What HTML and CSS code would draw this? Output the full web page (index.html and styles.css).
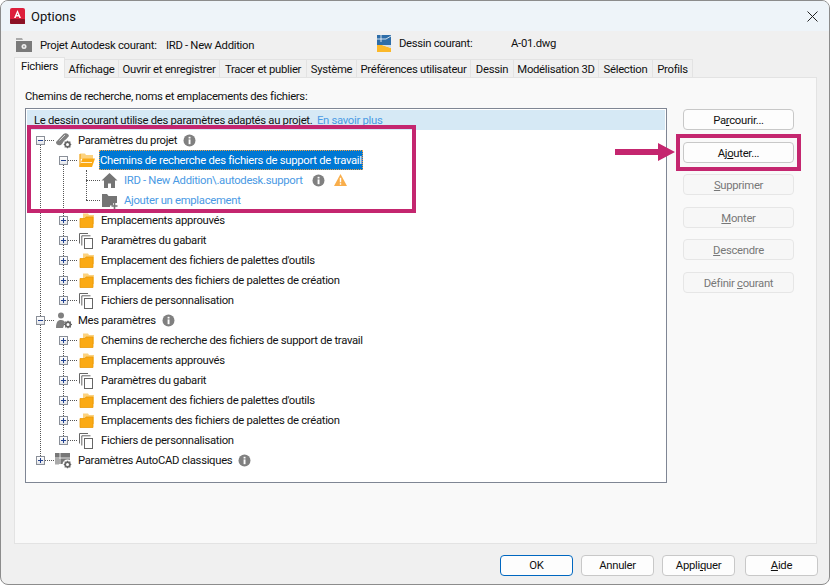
FILE: index.html
```html
<!DOCTYPE html>
<html lang="fr">
<head>
<meta charset="utf-8">
<title>Options</title>
<link rel="stylesheet" href="styles.css">
</head>
<body>
<svg class="defs" width="0" height="0" aria-hidden="true">
  <defs>
    <symbol id="i-info" viewBox="0 0 13 13"><circle cx="6.5" cy="6.5" r="6" fill="#808080"/><rect x="5.6" y="5.4" width="1.9" height="4.8" fill="#fff"/><rect x="5.6" y="2.8" width="1.9" height="1.7" fill="#fff"/></symbol>
    <symbol id="i-folder" viewBox="0 0 17 17"><path d="M5 1.500h5l1 1.500h5v9H5z" fill="#fcd27e"/><path d="M2 6.500h5l1-1.500h7v10.500H2z" fill="#fbaa14" stroke="#e89a0c" stroke-width=".8"/></symbol>
    <symbol id="i-open" viewBox="0 0 17 17"><path d="M2 1.500h5l1 1.500h7v4H2z" fill="#fcd27e"/><path d="M2 2v12" stroke="#f0a010" stroke-width="1.200"/><path d="M4.500 6.500H17l-3 8.500H1z" fill="#fbaa14"/><path d="M3 10.500h11" stroke="#fff" stroke-width=".8"/></symbol>
    <symbol id="i-pages" viewBox="0 0 17 17"><path d="M1.500 11.500V1.500H10M3.800 13.500V3.800H12.500" fill="none" stroke="#666" stroke-width="1"/><rect x="6.500" y="6.500" width="8" height="10" fill="#fff" stroke="#666"/></symbol>
    <symbol id="i-house" viewBox="0 0 17 17"><path d="M8.500 1 .5 8.500H3V16h4v-4.500h3V16h4V8.500h2.500z" fill="#757575"/></symbol>
    <symbol id="i-addfolder" viewBox="0 0 17 17"><path d="M1 2h5l1.500 2H16v7h-4v2.500H9V15H1z" fill="#757575"/><path d="M13.500 11v6M10.500 14h6" stroke="#757575" stroke-width="1.600"/></symbol>
    <symbol id="i-gear" viewBox="0 0 8 8"><circle cx="4" cy="4" r="2.400" fill="none" stroke="#666" stroke-width="1.800"/><path d="M4 0v1.500M4 6.500V8M0 4h1.500M6.500 4H8M1.200 1.200l1 1M5.800 5.800l1 1M1.200 6.800l1-1M5.800 2.200l1-1" stroke="#666" stroke-width="1.200"/></symbol>
    <symbol id="i-proj" viewBox="0 0 17 17"><path d="M1 10 8.500 2c2-1.500 5-.5 5.500 2l-7 8c-2 2.500-6.500 1-6-2z" fill="#808080"/><path d="M4.500 8.500 10 3" stroke="#eee" stroke-width=".8"/><circle cx="12.500" cy="12.500" r="5" fill="#fff"/><use href="#i-gear" x="8.500" y="8.500" width="8" height="8"/></symbol>
    <symbol id="i-user" viewBox="0 0 17 17"><circle cx="6" cy="3.500" r="3" fill="#808080"/><path d="M1 16c0-5.500 1.500-8 5-8 2.500 0 3.500 1 4 2.500L8 16z" fill="#808080"/><use href="#i-gear" x="9" y="8.500" width="8" height="8"/></symbol>
    <symbol id="i-classic" viewBox="0 0 17 17"><rect x="0" y="1" width="15" height="11" fill="#777"/><path d="M5 1v11M0 6h15" stroke="#fff" stroke-width=".8"/><rect x="0" y="7" width="4" height="5.500" fill="#aaa"/><circle cx="12.500" cy="12.500" r="5" fill="#fff"/><use href="#i-gear" x="8.500" y="8.500" width="8" height="8"/></symbol>
  </defs>
</svg>
<div class="window">
  <header class="titlebar">
    <svg class="app-icon" viewBox="0 0 15 16" aria-hidden="true"><path d="M2 0h11a2 2 0 0 1 2 2v14H2a2 2 0 0 1-2-2V2a2 2 0 0 1 2-2z" fill="#dd1f3c"/><rect x="0" y="11" width="15" height="5" rx="1" fill="#8c1226"/><path d="M7.500 2 4 10h1.700l.6-1.500h2.400l.6 1.500H11zM6.900 7l.6-2 .6 2z" fill="#fff"/></svg>
    <span class="title">Options</span>
    <svg class="close" viewBox="0 0 11 11" aria-hidden="true"><path d="M.5.500l10 10M10.500.500l-10 10" stroke="#222" stroke-width="1"/></svg>
  </header>
  <main class="body">
    <section class="info">
      <div class="info-left">
        <svg class="proj-icon" viewBox="0 0 16 14" aria-hidden="true"><path d="M0 0h6l1 2H0z" fill="#aaa"/><rect y="3" width="16" height="11" fill="#7a7a7a"/><circle cx="8" cy="8.500" r="2.500" fill="#eee"/><circle cx="8" cy="8.500" r="1" fill="#999"/></svg>
        <span class="info-label">Projet Autodesk courant:</span>
        <span>IRD - New Addition</span>
      </div>
      <div class="info-right">
        <svg class="dwg-icon" viewBox="0 0 14 17" aria-hidden="true"><rect width="14" height="10" fill="#2e6da8"/><path d="M0 4h9M4 0v7M9 4l5-3" stroke="#fff" stroke-width=".8"/><path d="M0 10h5l9 3v4H0z" fill="#fbb829"/><path d="M5 10h9v3z" fill="#cfdde9"/></svg>
        <span class="dwg-label">Dessin courant:</span>
        <span>A-01.dwg</span>
      </div>
    </section>
    <nav class="tabs">
      <div class="tab active">Fichiers</div>
      <div class="tab">Affichage</div>
      <div class="tab">Ouvrir et enregistrer</div>
      <div class="tab">Tracer et publier</div>
      <div class="tab">Système</div>
      <div class="tab">Préférences utilisateur</div>
      <div class="tab">Dessin</div>
      <div class="tab">Modélisation 3D</div>
      <div class="tab">Sélection</div>
      <div class="tab">Profils</div>
    </nav>
    <section class="panel">
      <div class="panel-main">
        <div class="panel-label">Chemins de recherche, noms et emplacements des fichiers:</div>
        <div class="tree-box">
          <div class="banner">Le dessin courant utilise des paramètres adaptés au projet. <a class="link learn">En savoir plus</a></div>
          <ul class="tree root">
            <li>
              <div class="row"><span class="toggle minus"></span><span class="dash"></span><svg class="icon"><use href="#i-proj"/></svg><span class="label">Paramètres du projet</span><svg class="info-dot"><use href="#i-info"/></svg></div>
              <ul class="tree sub">
                <li>
                  <div class="row"><span class="toggle minus"></span><span class="dash"></span><svg class="icon"><use href="#i-open"/></svg><span class="label selected">Chemins de recherche des fichiers de support de travail</span></div>
                  <ul class="tree leafs">
                    <li><div class="row"><span class="dash long"></span><svg class="icon"><use href="#i-house"/></svg><span class="label link">IRD - New Addition\.autodesk.support</span><svg class="info-dot"><use href="#i-info"/></svg><svg class="warn" viewBox="0 0 13 12" aria-hidden="true"><path d="M6.500 0 13 12H0z" fill="#f9ae4b"/><rect x="5.800" y="3.800" width="1.400" height="4.500" fill="#fff"/><rect x="5.800" y="9.200" width="1.400" height="1.500" fill="#fff"/></svg></div></li>
                    <li><div class="row"><span class="dash long"></span><svg class="icon"><use href="#i-addfolder"/></svg><span class="label link">Ajouter un emplacement</span></div></li>
                  </ul>
                </li>
                <li><div class="row"><span class="toggle plus"></span><span class="dash"></span><svg class="icon"><use href="#i-folder"/></svg><span class="label">Emplacements approuvés</span></div></li>
                <li><div class="row"><span class="toggle plus"></span><span class="dash"></span><svg class="icon"><use href="#i-pages"/></svg><span class="label">Paramètres du gabarit</span></div></li>
                <li><div class="row"><span class="toggle plus"></span><span class="dash"></span><svg class="icon"><use href="#i-folder"/></svg><span class="label">Emplacement des fichiers de palettes d'outils</span></div></li>
                <li><div class="row"><span class="toggle plus"></span><span class="dash"></span><svg class="icon"><use href="#i-folder"/></svg><span class="label">Emplacements des fichiers de palettes de création</span></div></li>
                <li><div class="row"><span class="toggle plus"></span><span class="dash"></span><svg class="icon"><use href="#i-pages"/></svg><span class="label">Fichiers de personnalisation</span></div></li>
              </ul>
            </li>
            <li>
              <div class="row"><span class="toggle minus"></span><span class="dash"></span><svg class="icon"><use href="#i-user"/></svg><span class="label">Mes paramètres</span><svg class="info-dot"><use href="#i-info"/></svg></div>
              <ul class="tree sub">
                <li><div class="row"><span class="toggle plus"></span><span class="dash"></span><svg class="icon"><use href="#i-folder"/></svg><span class="label">Chemins de recherche des fichiers de support de travail</span></div></li>
                <li><div class="row"><span class="toggle plus"></span><span class="dash"></span><svg class="icon"><use href="#i-folder"/></svg><span class="label">Emplacements approuvés</span></div></li>
                <li><div class="row"><span class="toggle plus"></span><span class="dash"></span><svg class="icon"><use href="#i-pages"/></svg><span class="label">Paramètres du gabarit</span></div></li>
                <li><div class="row"><span class="toggle plus"></span><span class="dash"></span><svg class="icon"><use href="#i-folder"/></svg><span class="label">Emplacement des fichiers de palettes d'outils</span></div></li>
                <li><div class="row"><span class="toggle plus"></span><span class="dash"></span><svg class="icon"><use href="#i-folder"/></svg><span class="label">Emplacements des fichiers de palettes de création</span></div></li>
                <li><div class="row"><span class="toggle plus"></span><span class="dash"></span><svg class="icon"><use href="#i-pages"/></svg><span class="label">Fichiers de personnalisation</span></div></li>
              </ul>
            </li>
            <li>
              <div class="row"><span class="toggle plus"></span><span class="dash"></span><svg class="icon"><use href="#i-classic"/></svg><span class="label">Paramètres AutoCAD classiques</span><svg class="info-dot"><use href="#i-info"/></svg></div>
            </li>
          </ul>
        </div>
      </div>
      <div class="side-buttons">
        <button class="btn">Pa<u>r</u>courir...</button>
        <button class="btn">Aj<u>o</u>uter...</button>
        <button class="btn" disabled><u>S</u>upprimer</button>
        <button class="btn" disabled><u>M</u>onter</button>
        <button class="btn" disabled><u>D</u>escendre</button>
        <button class="btn" disabled>Définir <u>c</u>ourant</button>
      </div>
    </section>
    <footer class="footer">
      <button class="btn wide primary">OK</button>
      <button class="btn wide">Annuler</button>
      <button class="btn wide">Appli<u>q</u>uer</button>
      <button class="btn wide last"><u>A</u>ide</button>
    </footer>
  </main>
  <div class="mark mark-tree"></div>
  <div class="mark mark-btn"></div>
  <svg class="mark-arrow" viewBox="0 0 60 18" aria-hidden="true"><path d="M0 6h43V0l17 9-17 9v-6H0z" fill="#c4266f"/></svg>
</div>
</body>
</html>
```
FILE: styles.css
```css
* { box-sizing: border-box; }
html, body { margin: 0; padding: 0; }
body {
  width: 830px;
  height: 585px;
  background: #fff;
  font-family: Roboto, "Liberation Sans", sans-serif;
  font-size: 11.3px;
  letter-spacing: -0.3px;
  color: #111;
  overflow: hidden;
}
.defs { position: absolute; }
.window {
  position: relative;
  width: 830px;
  height: 585px;
  display: flex;
  flex-direction: column;
  background: #f0f0f0;
  border: 1px solid #8c8c8c;
  border-radius: 8px;
  overflow: hidden;
}
.titlebar {
  flex: none;
  height: 30px;
  display: flex;
  align-items: center;
  padding: 0 11px 0 9px;
  background: #eef4f9;
}
.app-icon { width: 15px; height: 16px; }
.title { margin-left: 6px; font-size: 13px; letter-spacing: 0; }
.close { margin-left: auto; width: 11px; height: 11px; }
.body { flex: 1; display: flex; flex-direction: column; padding: 0 12px 0 13px; min-height: 0; }
.info {
  flex: none;
  height: 26px;
  display: grid;
  grid-template-columns: 363px 1fr;
}
.info-left { display: flex; align-items: center; padding: 2px 0 0 2px; height: 26px; white-space: nowrap; }
.info-right { display: flex; align-items: center; height: 24px; white-space: nowrap; }
.proj-icon { width: 16px; height: 14px; margin-right: 8px; }
.info-label { width: 126px; }
.dwg-icon { width: 14px; height: 17px; margin-right: 8px; }
.dwg-label { width: 112px; }
.tabs {
  flex: none;
  height: 20px;
  display: grid;
  grid-template-columns: 51px 54px 101px 87px 50px 114px 43px 85px 54px 40px;
  justify-content: start;
  position: relative;
  z-index: 1;
}
.tab {
  margin-top: 2px;
  height: 18px;
  padding-top: 2px;
  display: flex;
  align-items: center;
  justify-content: center;
  white-space: nowrap;
  background: #f0f0f0;
  border: 1px solid #e3e3e3;
  border-bottom: 0;
  border-left: 0;
}
.tab.active {
  margin-top: 0;
  height: 21px;
  padding-top: 0;
  padding-bottom: 3px;
  background: #f9f9f9;
  border-left: 1px solid #e3e3e3;
}
.panel {
  flex: none;
  width: 803px;
  height: 467px;
  display: flex;
  background: #f9f9f9;
  border: 1px solid #e3e3e3;
  padding-left: 10px;
}
.panel-main { width: 642px; flex: none; }
.panel-label { height: 16px; line-height: 18px; margin: 10px 0 4px; }
.tree-box {
  height: 375px;
  background: #fff;
  border: 1px solid #7f8694;
  padding: 1px;
}
.banner {
  height: 20px;
  line-height: 22px;
  padding-left: 7px;
  background: #d6e9f5;
  white-space: nowrap;
}
.link { color: #4a9ae4; }
.learn { margin-left: 2px; }
.tree { list-style: none; margin: 0; padding: 0; position: relative; }
.tree::before {
  content: "";
  position: absolute;
  left: 4px;
  top: 10px;
  bottom: 10px;
  border-left: 1px dotted #555;
}
.root { margin-left: 9px; }
.sub { margin-left: 23px; }
.leafs { margin-left: 27px; }
.leafs::before { left: 0; top: 0; }
.row {
  height: 20px;
  display: flex;
  align-items: center;
  position: relative;
  white-space: nowrap;
}
.toggle {
  flex: none;
  width: 9px;
  height: 9px;
  border: 1px solid #8a8f98;
  background: linear-gradient(#fff, #e4e6ea);
  position: relative;
  z-index: 1;
}
.toggle::before {
  content: "";
  position: absolute;
  left: 1px;
  top: 3px;
  width: 5px;
  height: 1px;
  background: #1f3f8f;
}
.toggle.plus::after {
  content: "";
  position: absolute;
  left: 3px;
  top: 1px;
  width: 1px;
  height: 5px;
  background: #1f3f8f;
}
.dash { flex: none; width: 9px; border-top: 1px dotted #555; }
.dash.long { width: 14px; }
.icon { flex: none; width: 17px; height: 17px; margin: 0 4px 0 1px; }
.label { padding: 0 2px; height: 20px; line-height: 22px; }
.selected {
  padding: 0 1px;
  background: #0078d4;
  color: #fff;
  outline: 1px dotted #f0a040;
  outline-offset: -1px;
}
.info-dot { flex: none; width: 13px; height: 13px; margin-left: 4px; }
.link + .info-dot { margin-left: 7px; }
.warn { flex: none; width: 13px; height: 12px; margin-left: 9px; }
.side-buttons {
  flex: none;
  width: 111px;
  margin: 31px 0 0 16px;
  display: flex;
  flex-direction: column;
  gap: 11.5px;
}
.side-buttons .btn { padding-top: 2px; }
.btn {
  height: 21px;
  padding: 0;
  font: inherit;
  letter-spacing: inherit;
  color: #111;
  background: #fdfdfd;
  border: 1px solid #c8c8c8;
  border-radius: 4px;
}
.btn:disabled { color: #777; background: #f7f7f7; border-color: #e6e6e6; }
.footer {
  flex: none;
  height: 40px;
  display: flex;
  justify-content: flex-end;
  gap: 8px;
  padding-top: 11px;
  margin-right: -1px;
}
.wide { width: 73px; }
.primary { border-color: #0067c0; }
.last { margin-left: 2px; }
.mark {
  position: absolute;
  border: 4px solid #c4266f;
}
.mark-tree { left: 26px; top: 124px; width: 389px; height: 88px; }
.mark-btn { left: 675px; top: 133px; width: 125px; height: 37px; }
.mark-arrow { position: absolute; left: 614px; top: 142px; width: 60px; height: 18px; }
```
